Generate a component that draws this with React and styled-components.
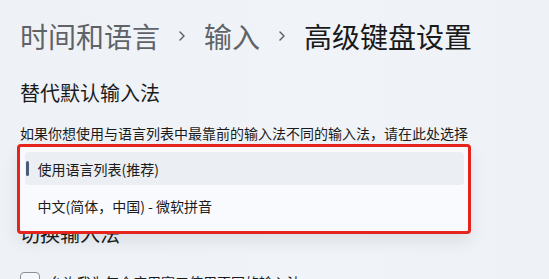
import React from "react";
import styled, { createGlobalStyle } from "styled-components";

const Global = createGlobalStyle`
  html, body {
    margin: 0;
    padding: 0;
    background: #eef2f7;
  }
  body {
    font-family: "Noto Sans CJK SC", "Noto Sans", sans-serif;
    color: #1b1b1b;
    overflow: hidden;
  }
`;

const Page = styled.div`
  width: 549px;
  height: 279px;
  padding: 16px 0 0 20px;
  box-sizing: border-box;
  background: linear-gradient(90deg, #eef2f7 0%, #f0f3f8 60%, #eef2f7 100%);
`;

const Breadcrumb = styled.div`
  display: flex;
  align-items: center;
  height: 40px;
  font-size: 28px;
  line-height: 40px;
  white-space: nowrap;
`;

const Crumb = styled.span`
  color: ${(p) => (p.$current ? "#1a1a1a" : "#5f6368")};
`;

const Sep = styled.svg`
  width: 6px;
  height: 10px;
  margin: 0 19px;
  flex: none;
  position: relative;
  top: 0px;
`;

const SectionTitle = styled.h2`
  margin: ${(p) => p.$top}px 0 0;
  font-size: 20px;
  line-height: 28px;
  font-weight: 400;
  color: #1b1b1b;
`;

const Description = styled.p`
  margin: 16.5px 0 0;
  font-size: 14px;
  line-height: 20px;
  color: #1b1b1b;
  white-space: nowrap;
`;

const PickerArea = styled.div`
  position: relative;
  padding-top: 8px;
`;

const ComboBox = styled.div`
  width: 200px;
  height: 32px;
  border-radius: 4px;
  background: #fbfcfd;
  border: 1px solid #e2e4e8;
  box-sizing: border-box;
`;

const Flyout = styled.div`
  position: absolute;
  top: 0.5px;
  left: -3px;
  width: 454px;
  height: 90.5px;
  box-sizing: border-box;
  border: 3.5px solid #e5241e;
  border-radius: 4px;
  background: #f8fafd;
  box-shadow: 0 8px 16px rgba(0, 0, 0, 0.08);
  padding: 5.5px 4.5px 0;
  display: flex;
  flex-direction: column;
  gap: 4px;
  z-index: 2;
`;

const Option = styled.div`
  position: relative;
  height: 33px;
  display: flex;
  align-items: center;
  padding-left: 13px;
  border-radius: 4px;
  font-size: 14px;
  color: #1b1b1b;
  background: ${(p) => (p.$selected ? "#ebeef2" : "transparent")};
`;

const Indicator = styled.span`
  position: absolute;
  left: 1.5px;
  top: 9px;
  width: 3px;
  height: 15px;
  border-radius: 1.5px;
  background: #4b5a76;
`;

const CheckRow = styled.label`
  display: flex;
  align-items: center;
  gap: 9px;
  margin-top: 24.5px;
  font-size: 14px;
  line-height: 20px;
  color: #1b1b1b;
`;

const Box = styled.span`
  width: 20px;
  height: 20px;
  box-sizing: border-box;
  border: 1px solid #8b9098;
  border-radius: 4px;
  background: #f5f7fa;
  flex: none;
`;

const Chevron = () => (
  <Sep viewBox="0 0 6 10">
    <path d="M1 1 L5 5 L1 9" fill="none" stroke="#5f6368" strokeWidth="1.5" strokeLinecap="round" strokeLinejoin="round" />
  </Sep>
);

export default function App() {
  return (
    <>
      <Global />
      <Page>
        <Breadcrumb>
          <Crumb>时间和语言</Crumb>
          <Chevron />
          <Crumb>输入</Crumb>
          <Chevron />
          <Crumb $current>高级键盘设置</Crumb>
        </Breadcrumb>
        <SectionTitle $top={22.5}>替代默认输入法</SectionTitle>
        <Description>如果你想使用与语言列表中最靠前的输入法不同的输入法，请在此处选择</Description>
        <PickerArea>
          <ComboBox />
          <Flyout>
            <Option $selected>
              <Indicator />
              使用语言列表(推荐)
            </Option>
            <Option>中文(简体，中国) - 微软拼音</Option>
          </Flyout>
        </PickerArea>
        <SectionTitle $top={36.5}>切换输入法</SectionTitle>
        <CheckRow>
          <Box />
          允许我为每个应用窗口使用不同的输入法
        </CheckRow>
      </Page>
    </>
  );
}
